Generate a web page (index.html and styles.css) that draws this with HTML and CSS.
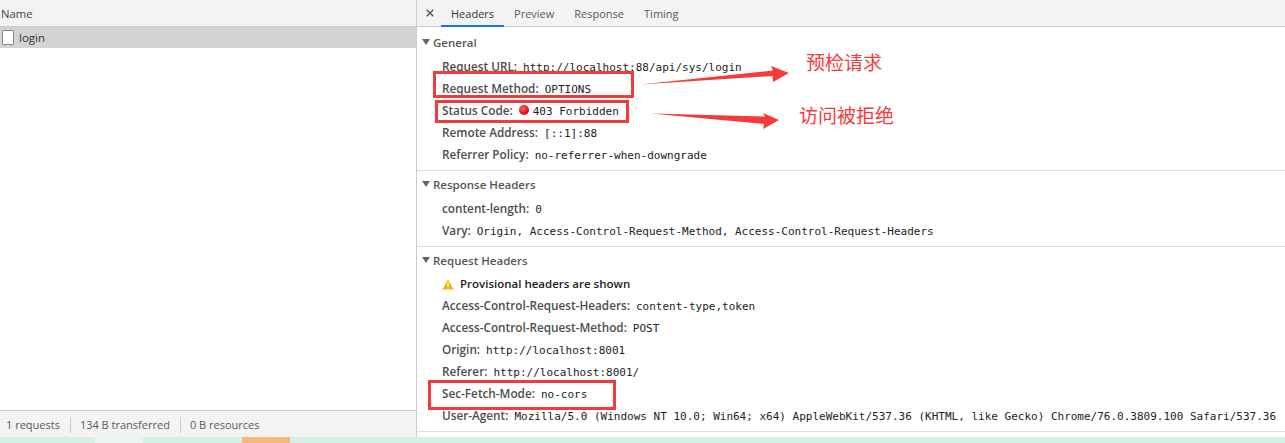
FILE: index.html
```html
<!DOCTYPE html>
<html lang="en">
<head>
<meta charset="utf-8">
<title>Network</title>
<link rel="stylesheet" href="styles.css">
</head>
<body>
<div class="page">
  <div class="main">
    <aside class="list">
      <div class="list-head">Name</div>
      <div class="list-body">
        <div class="req"><span class="file"></span><span>login</span></div>
      </div>
      <div class="list-foot">
        <span class="stat">1 requests</span>
        <span class="stat">134 B transferred</span>
        <span class="stat">0 B resources</span>
      </div>
    </aside>
    <section class="detail">
      <div class="tabs">
        <svg class="close" width="8" height="8" viewBox="0 0 8 8"><path d="M.7.7l6.600 6.600M7.300.7L.7 7.300"/></svg>
        <span class="tab active">Headers</span>
        <span class="tab">Preview</span>
        <span class="tab">Response</span>
        <span class="tab">Timing</span>
      </div>
      <div class="sections">
        <div class="sec sec-general">
          <div class="sec-title"><i class="tri"></i>General</div>
          <div class="row"><b>Request URL:</b><code>http://localhost:88/api/sys/login</code></div>
          <div class="row"><b>Request Method:</b><code>OPTIONS</code></div>
          <div class="row"><b>Status Code:</b><i class="dot"></i><code>403 Forbidden</code></div>
          <div class="row"><b>Remote Address:</b><code>[::1]:88</code></div>
          <div class="row"><b>Referrer Policy:</b><code>no-referrer-when-downgrade</code></div>
        </div>
        <div class="sec sec-response">
          <div class="sec-title"><i class="tri"></i>Response Headers</div>
          <div class="row"><b>content-length:</b><code>0</code></div>
          <div class="row"><b>Vary:</b><code>Origin, Access-Control-Request-Method, Access-Control-Request-Headers</code></div>
        </div>
        <div class="sec sec-request">
          <div class="sec-title"><i class="tri"></i>Request Headers</div>
          <div class="row warn">
            <svg class="warn-icon" width="12" height="11" viewBox="0 0 12 11"><path class="warn-bg" d="M6 0.5L11.600 10.500H0.4z"/><path class="warn-mark" d="M5.400 3.500h1.200v4H5.400zM5.400 8.200h1.200v1.200H5.400z"/></svg>
            <b>Provisional headers are shown</b>
          </div>
          <div class="row"><b>Access-Control-Request-Headers:</b><code>content-type,token</code></div>
          <div class="row"><b>Access-Control-Request-Method:</b><code>POST</code></div>
          <div class="row"><b>Origin:</b><code>http://localhost:8001</code></div>
          <div class="row"><b>Referer:</b><code>http://localhost:8001/</code></div>
          <div class="row"><b>Sec-Fetch-Mode:</b><code>no-cors</code></div>
          <div class="row"><b>User-Agent:</b><code>Mozilla/5.0 (Windows NT 10.0; Win64; x64) AppleWebKit/537.36 (KHTML, like Gecko) Chrome/76.0.3809.100 Safari/537.36</code></div>
        </div>
      </div>
    </section>
  </div>
  <div class="strip">
    <span class="seg seg-a"></span><span class="seg seg-b"></span><span class="seg seg-a2"></span><span class="seg seg-c"></span><span class="seg seg-d"></span>
  </div>
  <div class="mark box1"></div>
  <div class="mark box2"></div>
  <div class="mark box3"></div>
  <svg class="arrows" width="1285" height="443" viewBox="0 0 1285 443">
    <path d="M640 84.500L773 70.500L771 66L789 73L773 82L772.500 76z"/>
    <path d="M651 113.500L765 116.500L763 113L779 120L763 129L764 124z"/>
  </svg>
  <div class="note note1">预检请求</div>
  <div class="note note2">访问被拒绝</div>
</div>
</body>
</html>
```
FILE: styles.css
```css
* { box-sizing: border-box; }
html, body { margin: 0; padding: 0; background: #fff; overflow: hidden; }
.page {
  position: relative;
  width: 1285px;
  height: 443px;
  display: flex;
  flex-direction: column;
  font-family: "Open Sans", "Noto Sans", sans-serif;
  font-size: 12px;
  color: #333;
}
.main { display: flex; height: 437px; }
.list {
  width: 417px;
  display: flex;
  flex-direction: column;
  border-right: 1px solid #ccc;
}
.list-head {
  height: 27px;
  background: #f3f3f3;
  border-bottom: 1px solid #ccc;
  padding: 1px 1px 0;
  display: flex;
  align-items: center;
  color: #444;
  font-size: 11.300px;
}
.list-body { flex: 1; }
.req {
  height: 21px;
  background: #d3d3d3;
  display: flex;
  align-items: center;
  padding: 0 0 0 2px;
  gap: 5px;
  color: #333;
  font-size: 11.500px;
}
.file {
  width: 12px;
  height: 15px;
  background: #fff;
  border: 1px solid #888;
  border-radius: 1px;
}
.list-foot {
  height: 27px;
  background: #f3f3f3;
  border-top: 1px solid #ccc;
  display: flex;
  align-items: center;
  padding: 2px 0 0 6px;
  color: #5a5a5a;
  font-size: 11px;
}
.stat { padding-right: 10px; margin-right: 9px; border-right: 1px solid #ccc; line-height: 16px; }
.stat:last-child { border-right: 0; }
.detail { flex: 1; min-width: 0; display: flex; flex-direction: column; }
.tabs {
  height: 27px;
  background: #f3f3f3;
  border-bottom: 1px solid #ccc;
  display: flex;
  align-items: stretch;
  padding-left: 9px;
  color: #5a5a5a;
}
.close { fill: none; stroke: #555; stroke-width: 1.400; margin: 9px 7px 0 0; }
.tab { padding: 6px 10px 0; font-size: 11px; }
.tab.active { color: #333; border-bottom: 2px solid #1a73e8; height: 27px; }
.sections { flex: 1; }
.sec { border-bottom: 1px solid #ddd; padding-top: 2px; }
.sec-general { height: 144px; padding-top: 4px; }
.sec-response { height: 76px; }
.sec-request { height: 185px; }
.sec-title {
  height: 22px;
  margin-bottom: 2px;
  display: flex;
  align-items: center;
  font-weight: 600;
  color: #555;
  font-size: 11.500px;
  padding-left: 5px;
}
.tri {
  width: 0;
  height: 0;
  border-left: 4px solid transparent;
  border-right: 4px solid transparent;
  border-top: 6px solid #666;
  margin-right: 3px;
}
.row {
  height: 22px;
  line-height: 22px;
  display: flex;
  align-items: baseline;
  padding-left: 25px;
  white-space: nowrap;
  font-size: 11.750px;
}
.row b { font-weight: 600; color: #4d4d4d; margin-right: 6px; }
.row code { font-family: "DejaVu Sans Mono", monospace; font-size: 11px; color: #222; }
.dot {
  align-self: center;
  width: 10px;
  height: 10px;
  border-radius: 50%;
  background: radial-gradient(circle at 40% 35%, #f66, #d11 60%, #a00);
  margin-right: 4px;
}
.warn { align-items: center; height: 21px; padding-top: 1px; }
.warn b { color: #222; margin-left: 6px; font-size: 11.500px; }
.warn-bg { fill: #f2b400; }
.warn-mark { fill: #fff; }
.strip { height: 6px; display: flex; }
.seg { display: block; height: 100%; }
.seg-a { width: 95px; background: #d4f0e0; }
.seg-b { width: 48px; background: #e9f7f0; }
.seg-a2 { width: 99px; background: #d4f0e0; }
.seg-c { width: 48px; background: #f6b77c; }
.seg-d { flex: 1; background: #d4f0e0; }
.mark { position: absolute; border: 3px solid #f43a3a; }
.box1 { left: 433px; top: 71px; width: 201px; height: 27px; }
.box2 { left: 435px; top: 100px; width: 194px; height: 23px; }
.box3 { left: 428px; top: 380px; width: 188px; height: 30px; }
.arrows { position: absolute; left: 0; top: 0; fill: #f43a3a; pointer-events: none; }
.note {
  position: absolute;
  font-family: "Noto Sans CJK SC", sans-serif;
  font-size: 19px;
  line-height: 24px;
  color: #f43a3a;
  white-space: nowrap;
}
.note1 { left: 806px; top: 50px; }
.note2 { left: 799px; top: 103px; }
```
